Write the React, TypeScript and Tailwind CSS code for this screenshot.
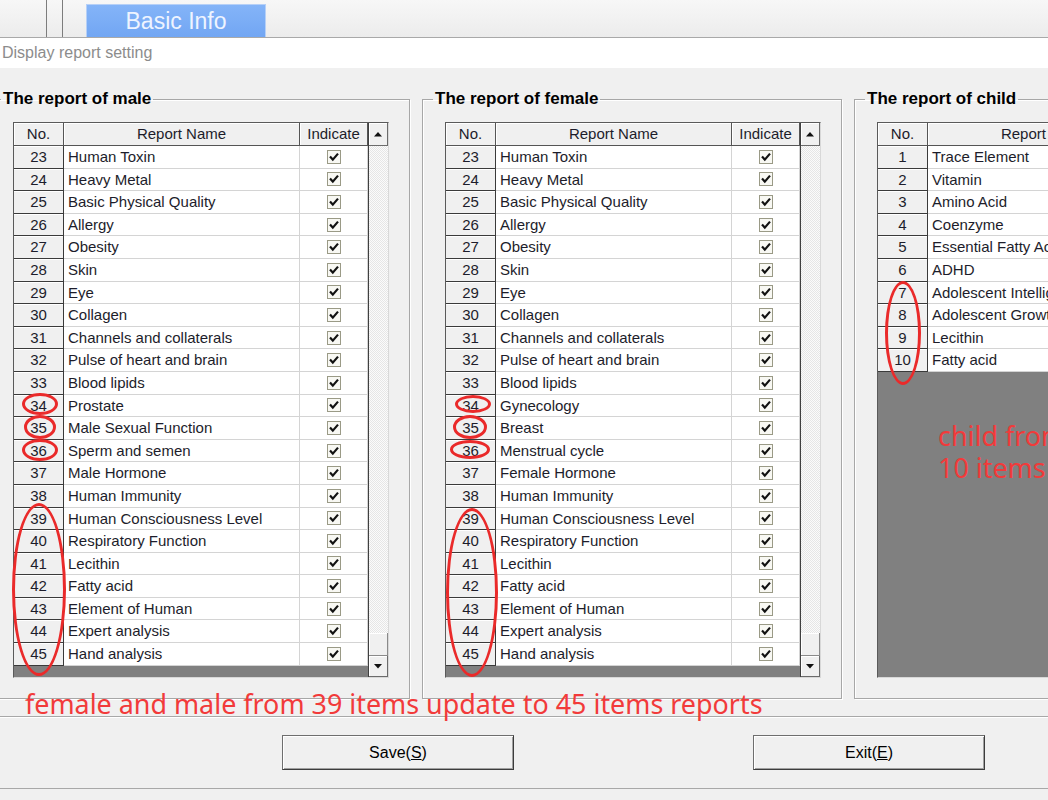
import React from "react";

type Row = [number, string];

const shared: string[] = [
  "Human Toxin",
  "Heavy Metal",
  "Basic Physical Quality",
  "Allergy",
  "Obesity",
  "Skin",
  "Eye",
  "Collagen",
  "Channels and collaterals",
  "Pulse of heart and brain",
  "Blood lipids",
];

const tail: string[] = [
  "Human Immunity",
  "Human Consciousness Level",
  "Respiratory Function",
  "Lecithin",
  "Fatty acid",
  "Element of Human",
  "Expert analysis",
  "Hand analysis",
];

const toRows = (names: string[], start: number): Row[] => names.map((n, i) => [start + i, n]);

const maleRows = toRows(
  [...shared, "Prostate", "Male Sexual Function", "Sperm and semen", "Male Hormone", ...tail],
  23
);
const femaleRows = toRows(
  [...shared, "Gynecology", "Breast", "Menstrual cycle", "Female Hormone", ...tail],
  23
);
const childRows = toRows(
  [
    "Trace Element",
    "Vitamin",
    "Amino Acid",
    "Coenzyme",
    "Essential Fatty Acid",
    "ADHD",
    "Adolescent Intelligence",
    "Adolescent Growth",
    "Lecithin",
    "Fatty acid",
  ],
  1
);

function Check() {
  return (
    <span className="flex h-[14px] w-[14px] items-center justify-center border border-[#9a9a86] bg-[#f8f8f3]">
      <svg width="10" height="10" viewBox="0 0 10 10">
        <polyline points="1,4.6 3.8,7.6 9,1.6" fill="none" stroke="#111" strokeWidth="2.2" />
      </svg>
    </span>
  );
}

function Arrow({ down }: { down?: boolean }) {
  return (
    <svg width="8" height="5" viewBox="0 0 8 5">
      <polygon points={down ? "0,0 8,0 4,4.5" : "0,4.5 8,4.5 4,0"} fill="#111" />
    </svg>
  );
}

function ReportTable({ rows, scroll }: { rows: Row[]; scroll?: boolean }) {
  return (
    <div className="flex h-[556px] w-[376px] border-t border-l border-[#5a5a5a] border-b border-r border-b-[#d8d8d8] border-r-[#d8d8d8]">
      <div className="flex w-[354px] shrink-0 flex-col bg-[#808080]">
        <div className="grid h-[23px] grid-cols-[50px_236px_1fr] text-[15px] leading-[22px] text-[#1d1d2b]">
          {["No.", "Report Name", "Indicate"].map((h) => (
            <div
              key={h}
              className="border-r border-b border-[#555] bg-[#f0f0f0] text-center shadow-[inset_1px_1px_0_#fff]"
            >
              {h}
            </div>
          ))}
        </div>
        {rows.map(([no, name]) => (
          <div key={no} className="grid h-[22.6px] grid-cols-[50px_236px_1fr] text-[15px] leading-[21px] text-[#1d1d2b]">
            <div className="border-r border-b border-[#3a3a3a] bg-[#f0f0f0] text-center shadow-[inset_0_1px_0_#fff]">
              {no}
            </div>
            <div className="border-r border-b border-[#d4d4d4] bg-white pl-[4px] whitespace-nowrap">{name}</div>
            <div className="flex items-center justify-center border-r border-b border-[#d4d4d4] bg-white">
              <Check />
            </div>
          </div>
        ))}
      </div>
      {scroll ? (
        <div className="flex w-[22px] flex-col border-l border-[#404040]">
          <div className="flex h-[23px] items-center justify-center border-r border-b border-[#6b6b6b] bg-[#f0f0f0] shadow-[inset_1px_1px_0_#fff]">
            <Arrow />
          </div>
          <div className="flex-1 bg-[#f6f6f6] bg-[repeating-conic-gradient(#e6e6e6_0%_25%,#fbfbfb_0%_50%)] bg-[length:2px_2px]" />
          <div className="h-[23px] border-r border-b border-[#8a8a8a] bg-[#f0f0f0] shadow-[inset_1px_1px_0_#fff]" />
          <div className="flex h-[21px] items-center justify-center border-r border-b border-[#6b6b6b] bg-[#f0f0f0] shadow-[inset_1px_1px_0_#fff]">
            <Arrow down />
          </div>
        </div>
      ) : (
        <div className="w-[22px] bg-[#808080]" />
      )}
    </div>
  );
}

function Group({ title, rows, scroll }: { title: string; rows: Row[]; scroll?: boolean }) {
  return (
    <fieldset className="h-[611px] w-[420px] shrink-0 border border-[#a7a7a7] shadow-[inset_1px_1px_0_#fff,1px_1px_0_#fff]">
      <legend className="ml-[10px] px-[2px] text-[17px] leading-[22px] font-bold text-black">{title}</legend>
      <div className="pt-[12px] pl-[22px]">
        <ReportTable rows={rows} scroll={scroll} />
      </div>
    </fieldset>
  );
}

function Ring({ className }: { className: string }) {
  return <div className={`absolute rounded-[50%] border-[3px] border-[#ea2a2a] ${className}`} />;
}

function Button({ label, hot }: { label: string; hot: string }) {
  return (
    <button className="h-[35px] w-[232px] border border-[#6e6e6e] border-r-[#3c3c3c] border-b-[#3c3c3c] bg-[#f0f0f0] text-[16px] text-black shadow-[inset_1px_1px_0_#fff,inset_-1px_-1px_0_#a0a0a0]">
      {label}(<u>{hot}</u>)
    </button>
  );
}

export default function App() {
  return (
    <div className="relative h-[800px] w-[1048px] overflow-hidden bg-[#f0f0f0] font-['Liberation_Sans',Arial,sans-serif]">
      <div className="flex h-[38px] border-b border-[#a9a9a9] bg-gradient-to-b from-[#f7f7f7] to-[#ececec]">
        <div className="w-[47px] border-r border-[#7d7d7d]" />
        <div className="w-[16px] border-r border-[#7d7d7d]" />
        <div className="ml-[23px] mt-[4px] flex h-[33px] w-[180px] items-center justify-center border border-b-0 border-[#b6d0f7] bg-gradient-to-b from-[#84b4f8] to-[#72a6f3] text-[23px] text-[#eef4ff]">
          Basic Info
        </div>
      </div>
      <div className="h-[30px] bg-white pl-[2px] text-[16px] leading-[30px] text-[#8c8c8c]">Display report setting</div>

      <div className="-ml-[10px] flex gap-[12px] pt-[20px]">
        <Group title="The report of male" rows={maleRows} scroll />
        <Group title="The report of female" rows={femaleRows} scroll />
        <Group title="The report of child" rows={childRows} />
      </div>

      <div className="mt-[17px] flex h-[73px] items-center border-t border-b border-[#a8a8a8] shadow-[inset_0_1px_0_#fff]">
        <div className="ml-[282px]">
          <Button label="Save" hot="S" />
        </div>
        <div className="ml-[239px]">
          <Button label="Exit" hot="E" />
        </div>
      </div>

      {/* annotation overlay */}
      <Ring className="left-[22px] top-[393px] h-[22px] w-[36px]" />
      <Ring className="left-[24px] top-[415px] h-[24px] w-[32px]" />
      <Ring className="left-[22px] top-[439px] h-[22px] w-[36px]" />
      <Ring className="left-[12px] top-[503px] h-[173px] w-[54px]" />
      <Ring className="left-[455px] top-[395px] h-[18px] w-[36px]" />
      <Ring className="left-[453px] top-[415px] h-[24px] w-[34px]" />
      <Ring className="left-[450px] top-[440px] h-[19px] w-[40px]" />
      <Ring className="left-[446px] top-[508px] h-[169px] w-[52px]" />
      <Ring className="left-[885px] top-[281px] h-[104px] w-[36px]" />

      <div className="absolute left-[25px] top-[687px] font-['Noto_Sans',sans-serif] text-[26.9px] leading-[34px] whitespace-nowrap text-[#f23a3a]">
        female and male from 39 items update to 45 items reports
      </div>
      <div className="absolute left-[938px] top-[420px] font-['Noto_Sans',sans-serif] text-[26.9px] leading-[32px] whitespace-nowrap text-[#f23a3a]">
        child from
      </div>
      <div className="absolute left-[938px] top-[452px] font-['Noto_Sans',sans-serif] text-[26.9px] leading-[32px] whitespace-nowrap text-[#f23a3a]">
        10 items
      </div>
    </div>
  );
}
